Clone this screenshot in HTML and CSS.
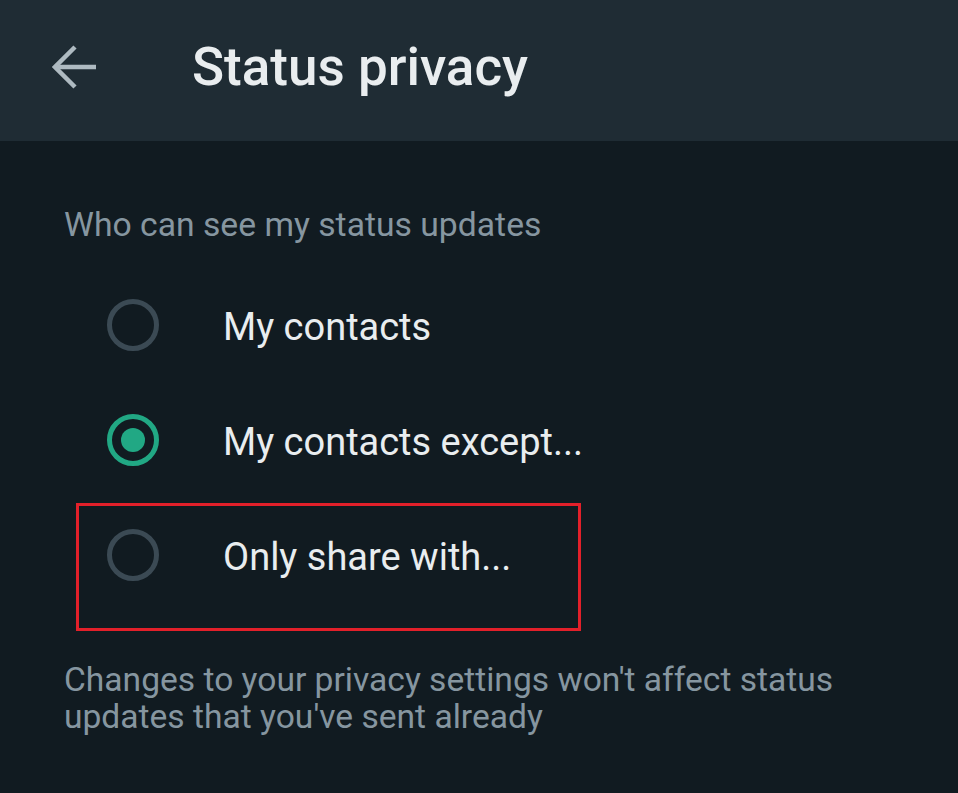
FILE: index.html
```html
<!DOCTYPE html>
<html lang="en">
<head>
<meta charset="utf-8">
<title>Status privacy</title>
<link rel="stylesheet" href="styles.css">
</head>
<body>
<header class="app-bar">
  <svg class="back-icon" viewBox="0 0 46 46" width="46" height="46" aria-hidden="true">
    <line x1="3" y1="23" x2="44" y2="23" />
    <polyline points="23,3 3,23 23,43" />
  </svg>
  <h1 class="title">Status privacy</h1>
</header>
<main class="content">
  <p class="section-label">Who can see my status updates</p>
  <ul class="options">
    <li class="option">
      <span class="radio"></span>
      <span class="option-label">My contacts</span>
    </li>
    <li class="option">
      <span class="radio radio-checked"></span>
      <span class="option-label">My contacts except...</span>
    </li>
    <li class="option option-highlight">
      <span class="radio"></span>
      <span class="option-label">Only share with...</span>
      <span class="highlight-box"></span>
    </li>
  </ul>
  <p class="note">Changes to your privacy settings won't affect status updates that you've sent already</p>
</main>
</body>
</html>
```

FILE: styles.css
```css
html, body {
  margin: 0;
  padding: 0;
}

body {
  background: #111b21;
  font-family: Roboto, "Noto Sans", "Liberation Sans", sans-serif;
  width: 958px;
  height: 793px;
  overflow: hidden;
}

.app-bar {
  height: 141px;
  box-sizing: border-box;
  background: #1f2c34;
  display: flex;
  align-items: center;
  padding: 0 0 7px 52px;
}

.back-icon {
  flex: none;
  fill: none;
  stroke: #aebac1;
  stroke-width: 4.5;
  stroke-linejoin: miter;
}

.title {
  margin: 0 0 0 94px;
  font-size: 53px;
  font-weight: 500;
  line-height: 62px;
  color: #e9edef;
  letter-spacing: 0;
}

.content {
  padding: 65px 0 0 64px;
}

.section-label {
  margin: 0;
  font-size: 33.7px;
  line-height: 37px;
  color: #8696a0;
}

.options {
  list-style: none;
  margin: 24px 0 0 0;
  padding: 0;
}

.option {
  position: relative;
  height: 115px;
  display: flex;
  align-items: center;
  padding-left: 43px;
}

.radio {
  flex: none;
  width: 52px;
  height: 52px;
  box-sizing: border-box;
  border: 5px solid #3b4a54;
  border-radius: 50%;
  display: flex;
  align-items: center;
  justify-content: center;
}

.radio-checked {
  border-color: #21a884;
}

.radio-checked::after {
  content: "";
  width: 24px;
  height: 24px;
  border-radius: 50%;
  background: #21a884;
}

.option-label {
  margin-left: 64px;
  padding-top: 6px;
  font-size: 38px;
  line-height: 45px;
  color: #e9edef;
}

.highlight-box {
  position: absolute;
  left: 12px;
  top: 6px;
  width: 505px;
  height: 128px;
  box-sizing: border-box;
  border: 3.5px solid #e3202a;
  pointer-events: none;
}

.note {
  margin: 49px 0 0 0;
  max-width: 830px;
  font-size: 33.6px;
  line-height: 37px;
  color: #8696a0;
}
```
